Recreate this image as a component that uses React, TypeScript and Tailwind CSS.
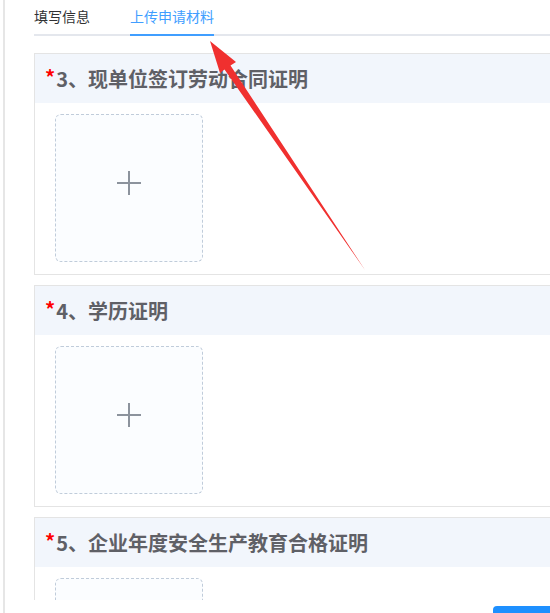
import React from "react";

// upload sections shown on the "上传申请材料" tab
const sections = [
  { id: 3, title: "现单位签订劳动合同证明" },
  { id: 4, title: "学历证明" },
  { id: 5, title: "企业年度安全生产教育合格证明" },
];

function UploadBox() {
  return (
    <div className="w-[148px] h-[148px] rounded-[6px] border border-dashed border-[#c0ccda] bg-[#fbfdff] flex items-center justify-center">
      <svg width="26" height="26" viewBox="0 0 26 26" className="-translate-y-[5px]">
        <path d="M13 1v24M1 13h24" stroke="#8c939d" strokeWidth="2" />
      </svg>
    </div>
  );
}

function Section({ id, title }: { id: number; title: string }) {
  return (
    <div className="border border-r-0 border-[#e4e4e4] mb-[10px]">
      <div className="h-[49px] bg-[#f2f6fc] flex items-center pl-[10px]">
        <span className="text-[20px] font-bold text-[#f00] leading-none mr-[1px] -mt-[4px]">*</span>
        <span className="text-[20px] font-bold text-[#5f6066] leading-none">
          {id}、{title}
        </span>
      </div>
      <div className="pl-[20px] pt-[11px] pb-[12px]">
        <UploadBox />
      </div>
    </div>
  );
}

export default function App() {
  return (
    <div
      className="relative w-[550px] h-[613px] overflow-hidden bg-white pl-[3px]"
      style={{ fontFamily: '"Noto Sans CJK SC", "Noto Sans", sans-serif' }}
    >
      <div className="h-full border-l-2 border-[#e6e6e6] pl-[29px] flex flex-col">
        <div className="h-[600px] overflow-hidden">
          {/* tabs */}
          <div className="flex gap-[40px] border-b-2 border-[#e4e7ed] h-[36px] pt-[5px]">
            <div className="text-[14px] leading-[22px] text-[#303133]">填写信息</div>
            <div className="text-[14px] leading-[22px] text-[#409eff] border-b-2 border-[#409eff] h-[31px] -mb-[2px]">
              上传申请材料
            </div>
          </div>
          <div className="pt-[17px]">
            {sections.map((s) => (
              <Section key={s.id} id={s.id} title={s.title} />
            ))}
          </div>
        </div>
        <div className="flex-1 flex justify-end items-end">
          <div className="w-[57px] h-[7px] bg-[#1e90ff] rounded-tl-[4px]" />
        </div>
      </div>

      {/* red annotation arrow */}
      <svg className="absolute left-0 top-0 pointer-events-none" width="550" height="613">
        <polygon
          points="210,41 236,62 230.5,65.5 365,270 224.5,69.5 220,73"
          fill="#f0302f"
        />
      </svg>
    </div>
  );
}
